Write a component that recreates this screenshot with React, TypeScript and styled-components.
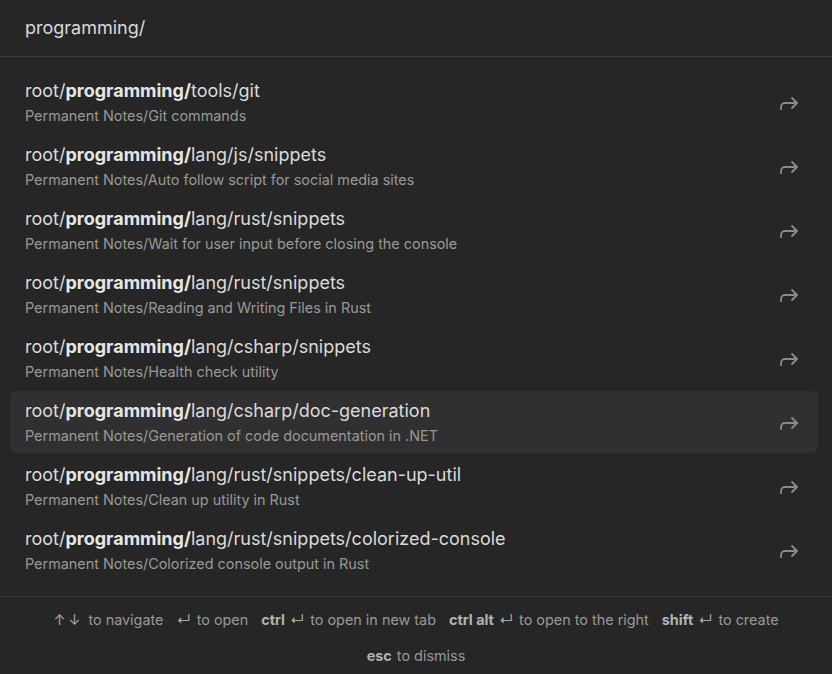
import React from "react";
import styled, { createGlobalStyle } from "styled-components";

const Global = createGlobalStyle`
  html, body { margin: 0; padding: 0; background: #262626; }
  body { font-family: Inter, "Noto Sans", sans-serif; -webkit-font-smoothing: antialiased; }
`;

const Modal = styled.div`
  width: 832px;
  height: 674px;
  background: #262626;
  display: flex;
  flex-direction: column;
  box-sizing: border-box;
  overflow: hidden;
`;

const InputBar = styled.div`
  flex-shrink: 0;
  height: 57px;
  box-sizing: border-box;
  border-bottom: 1px solid #363636;
  display: flex;
  align-items: center;
  padding: 0 25px 2px;
  font-size: 18px;
  color: #dadada;
`;

const List = styled.div`
  flex-shrink: 0;
  display: flex;
  flex-direction: column;
  gap: 2px;
  padding: 14px 14px 15px 10px;
  border-bottom: 1px solid #363636;
`;

const Row = styled.div<{ $selected?: boolean }>`
  height: 62px;
  box-sizing: border-box;
  border-radius: 6px;
  background: ${(p) => (p.$selected ? "#303030" : "transparent")};
  display: flex;
  align-items: center;
  padding: 8px 17px 7px 15px;
`;

const Texts = styled.div`
  flex: 1;
  display: flex;
  flex-direction: column;
  align-self: stretch;
`;

const Title = styled.div`
  font-size: 18px;
  line-height: 24px;
  color: #dadada;
  white-space: nowrap;
  b { font-weight: 700; color: #e6e6e6; }
`;

const Sub = styled.div`
  margin-top: 3px;
  font-size: 14.4px;
  line-height: 20px;
  color: #999999;
  white-space: nowrap;
`;

const Footer = styled.div`
  flex: 1;
  display: flex;
  flex-wrap: wrap;
  justify-content: center;
  align-content: flex-start;
  column-gap: 13px;
  padding: 5px 40px 0;
  font-size: 14.4px;
  color: #999999;
`;

const Hint = styled.span`
  line-height: 36px;
  white-space: nowrap;
  b { font-weight: 700; color: #b3b3b3; margin-right: 5px; }
`;

const Sym = styled.span<{ $spaced?: boolean }>`
  margin-right: ${(p) => (p.$spaced ? "5px" : "6px")};
  color: #a6a6a6;
  letter-spacing: ${(p) => (p.$spaced ? "3px" : "0")};
`;

const Arrow = () => (
  <svg width="24" height="24" viewBox="0 0 24 24" fill="none" stroke="#8a8a8a" strokeWidth="1.8" strokeLinecap="round" strokeLinejoin="round">
    <polyline points="15 17 20 12 15 7" />
    <path d="M4 18v-2a4 4 0 0 1 4-4h12" />
  </svg>
);

const items = [
  ["tools/git", "Git commands"],
  ["lang/js/snippets", "Auto follow script for social media sites"],
  ["lang/rust/snippets", "Wait for user input before closing the console"],
  ["lang/rust/snippets", "Reading and Writing Files in Rust"],
  ["lang/csharp/snippets", "Health check utility"],
  ["lang/csharp/doc-generation", "Generation of code documentation in .NET"],
  ["lang/rust/snippets/clean-up-util", "Clean up utility in Rust"],
  ["lang/rust/snippets/colorized-console", "Colorized console output in Rust"],
];

export default function App() {
  return (
    <>
      <Global />
      <Modal>
        <InputBar>programming/</InputBar>
        <List>
          {items.map(([path, note], i) => (
            <Row key={i} $selected={i === 5}>
              <Texts>
                <Title>
                  root/<b>programming/</b>
                  {path}
                </Title>
                <Sub>Permanent Notes/{note}</Sub>
              </Texts>
              <Arrow />
            </Row>
          ))}
        </List>
        <Footer>
          <Hint><Sym $spaced>↑↓</Sym>to navigate</Hint>
          <Hint><Sym>↵</Sym>to open</Hint>
          <Hint><b>ctrl</b><Sym>↵</Sym>to open in new tab</Hint>
          <Hint><b>ctrl alt</b><Sym>↵</Sym>to open to the right</Hint>
          <Hint><b>shift</b><Sym>↵</Sym>to create</Hint>
          <Hint><b>esc</b>to dismiss</Hint>
        </Footer>
      </Modal>
    </>
  );
}
